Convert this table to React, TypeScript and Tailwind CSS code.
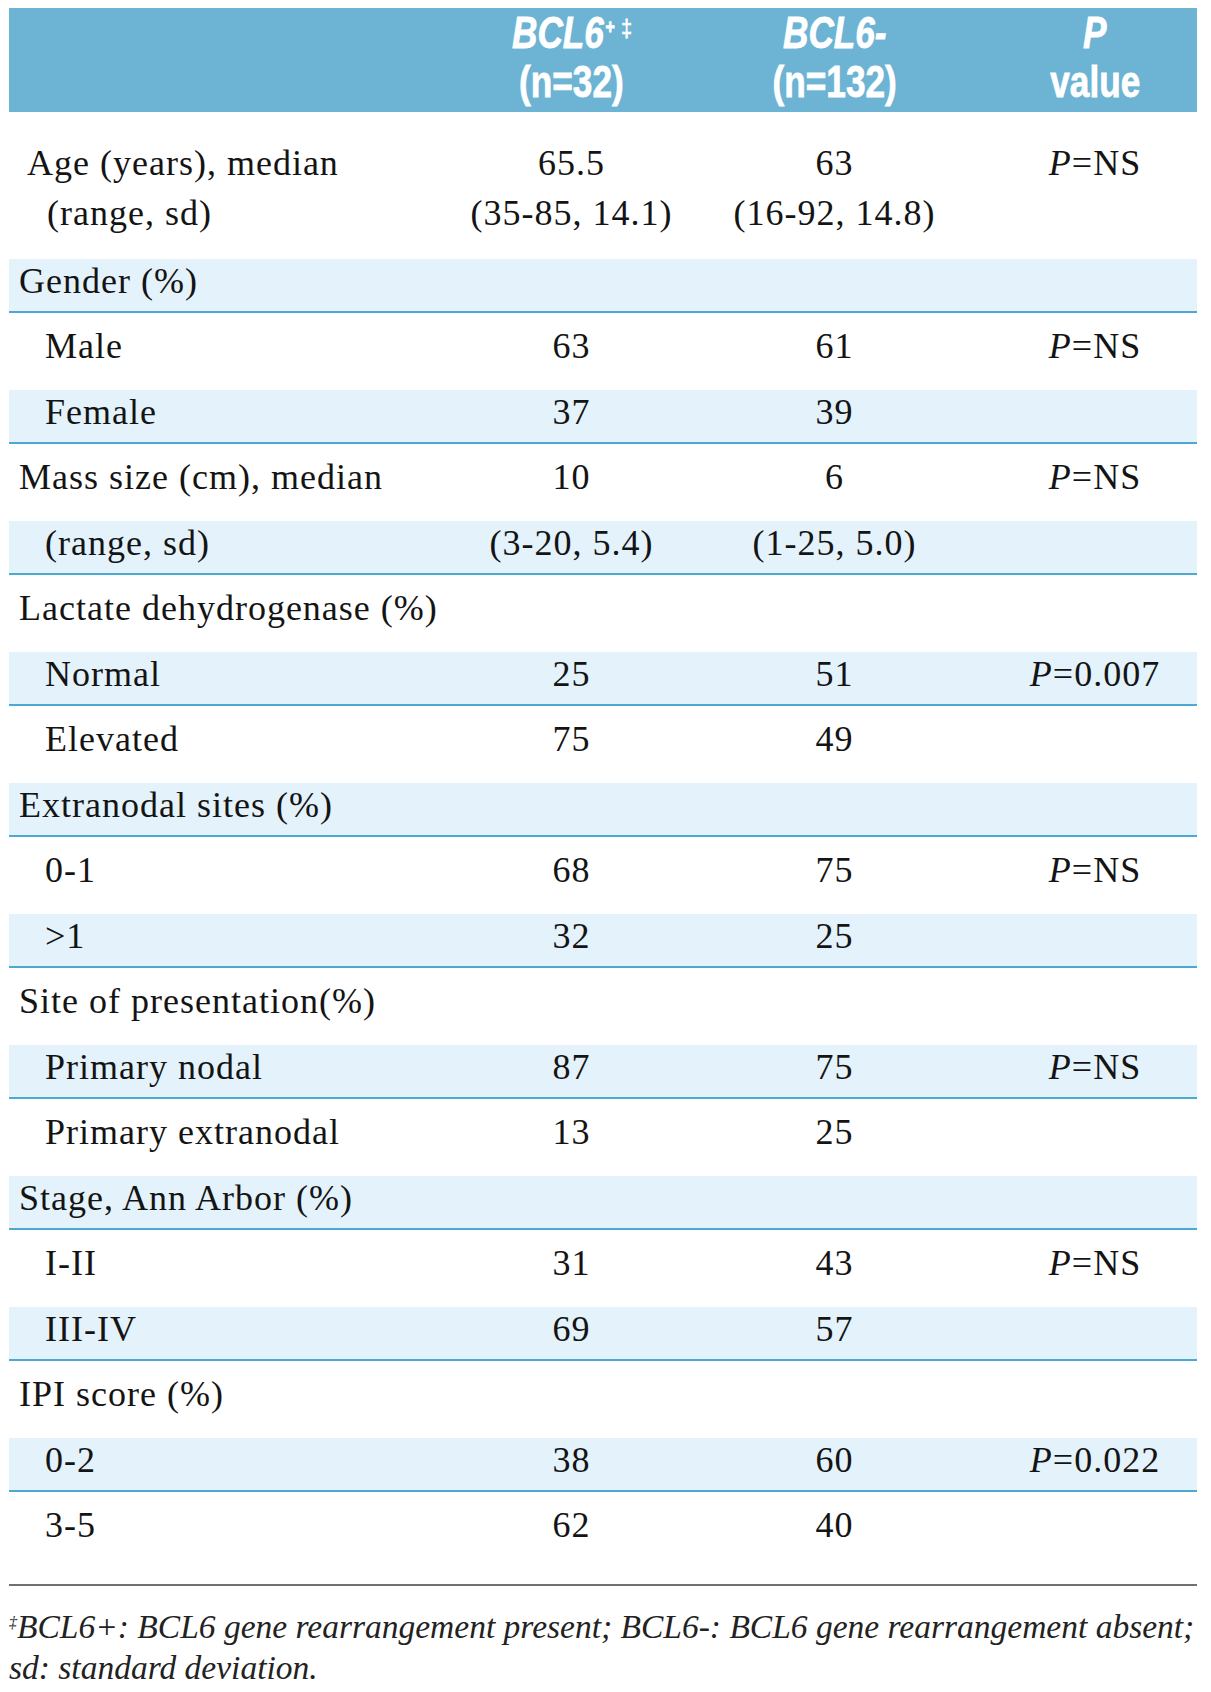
import React from 'react'

type Row = {
  label: string
  a?: string
  b?: string
  p?: string
  indent?: boolean
}

// rows after the Age row; bands alternate starting with "Gender"
const ROWS: Row[] = [
  { label: 'Gender (%)' },
  { label: 'Male', a: '63', b: '61', p: 'NS', indent: true },
  { label: 'Female', a: '37', b: '39', indent: true },
  { label: 'Mass size (cm), median', a: '10', b: '6', p: 'NS' },
  { label: '(range, sd)', a: '(3-20, 5.4)', b: '(1-25, 5.0)', indent: true },
  { label: 'Lactate dehydrogenase (%)' },
  { label: 'Normal', a: '25', b: '51', p: '0.007', indent: true },
  { label: 'Elevated', a: '75', b: '49', indent: true },
  { label: 'Extranodal sites (%)' },
  { label: '0-1', a: '68', b: '75', p: 'NS', indent: true },
  { label: '>1', a: '32', b: '25', indent: true },
  { label: 'Site of presentation(%)' },
  { label: 'Primary nodal', a: '87', b: '75', p: 'NS', indent: true },
  { label: 'Primary extranodal', a: '13', b: '25', indent: true },
  { label: 'Stage, Ann Arbor (%)' },
  { label: 'I-II', a: '31', b: '43', p: 'NS', indent: true },
  { label: 'III-IV', a: '69', b: '57', indent: true },
  { label: 'IPI score (%)' },
  { label: '0-2', a: '38', b: '60', p: '0.022', indent: true },
  { label: '3-5', a: '62', b: '40', indent: true },
]

const grid = 'grid grid-cols-[431px_263px_263px_231px]'

function PValue({ p }: { p?: string }) {
  if (!p) return null
  return (
    <>
      <i>P</i>={p}
    </>
  )
}

function HeadCell({ top, bottom }: { top: React.ReactNode; bottom: string }) {
  return (
    <div className="flex flex-col items-center">
      <span className="block h-[49px] scale-x-[0.8] whitespace-nowrap">{top}</span>
      <span className="block h-[49px] scale-x-[0.8] whitespace-nowrap">{bottom}</span>
    </div>
  )
}

export default function App() {
  return (
    <div className="w-[1211px] h-[1692px] bg-white pt-[8px] pl-[9px] text-[#141414] font-['Liberation_Serif',serif]">
      <div className="w-[1188px]">
        {/* header */}
        <div
          className={`${grid} h-[104px] bg-[#6db3d3] text-white font-bold text-[44px] leading-[49px] [-webkit-text-stroke:0.8px_white] font-['Liberation_Sans',sans-serif]`}
        >
          <div />
          <HeadCell
            top={
              <>
                <i>BCL6</i>
                <span className="relative -top-[14px] ml-[2px] text-[20px] leading-none">+</span>
                <span className="relative -top-[12px] ml-[8px] text-[24px] leading-none font-normal">‡</span>
              </>
            }
            bottom="(n=32)"
          />
          <HeadCell top={<i>BCL6-</i>} bottom="(n=132)" />
          <div className="pl-[27px]">
            <HeadCell top={<i>P</i>} bottom="value" />
          </div>
        </div>

        {/* age */}
        <div className={`${grid} h-[147px] pt-[26px] text-[36px] leading-[50px] tracking-[1px]`}>
          <div className="pl-[18px]">
            <div>Age (years), median</div>
            <div className="pl-[20px]">(range, sd)</div>
          </div>
          <div className="text-center">
            <div>65.5</div>
            <div>(35-85, 14.1)</div>
          </div>
          <div className="text-center">
            <div>63</div>
            <div>(16-92, 14.8)</div>
          </div>
          <div className="pl-[27px] text-center">
            <PValue p="NS" />
          </div>
        </div>

        {ROWS.map((r, i) => {
          const band = i % 2 === 0
          return (
            <div
              key={r.label + i}
              className={`${grid} text-[36px] leading-[40px] tracking-[1px] ${
                band
                  ? 'h-[54px] pt-[2px] bg-[#e3f2fb] border-b-2 border-[#4ba9d2]'
                  : 'h-[77px] pt-[13px]'
              }`}
            >
              <div className={`whitespace-nowrap ${r.indent ? 'pl-[36px]' : 'pl-[10px]'}`}>{r.label}</div>
              <div className="text-center">{r.a}</div>
              <div className="text-center">{r.b}</div>
              <div className="pl-[27px] text-center whitespace-nowrap">
                <PValue p={r.p} />
              </div>
            </div>
          )
        })}

        <div className="mt-[15px] h-[2px] bg-[#707070]" />

        <div className="pt-[20px] text-[33.5px] leading-[41px] italic whitespace-nowrap text-[#222]">
          <div className="h-[41px]">
            <span className="relative -top-[10px] text-[16px] leading-none">‡</span>BCL6+: BCL6 gene rearrangement
            present; BCL6-: BCL6 gene rearrangement absent;
          </div>
          <div className="h-[41px]">sd: standard deviation.</div>
        </div>
      </div>
    </div>
  )
}
